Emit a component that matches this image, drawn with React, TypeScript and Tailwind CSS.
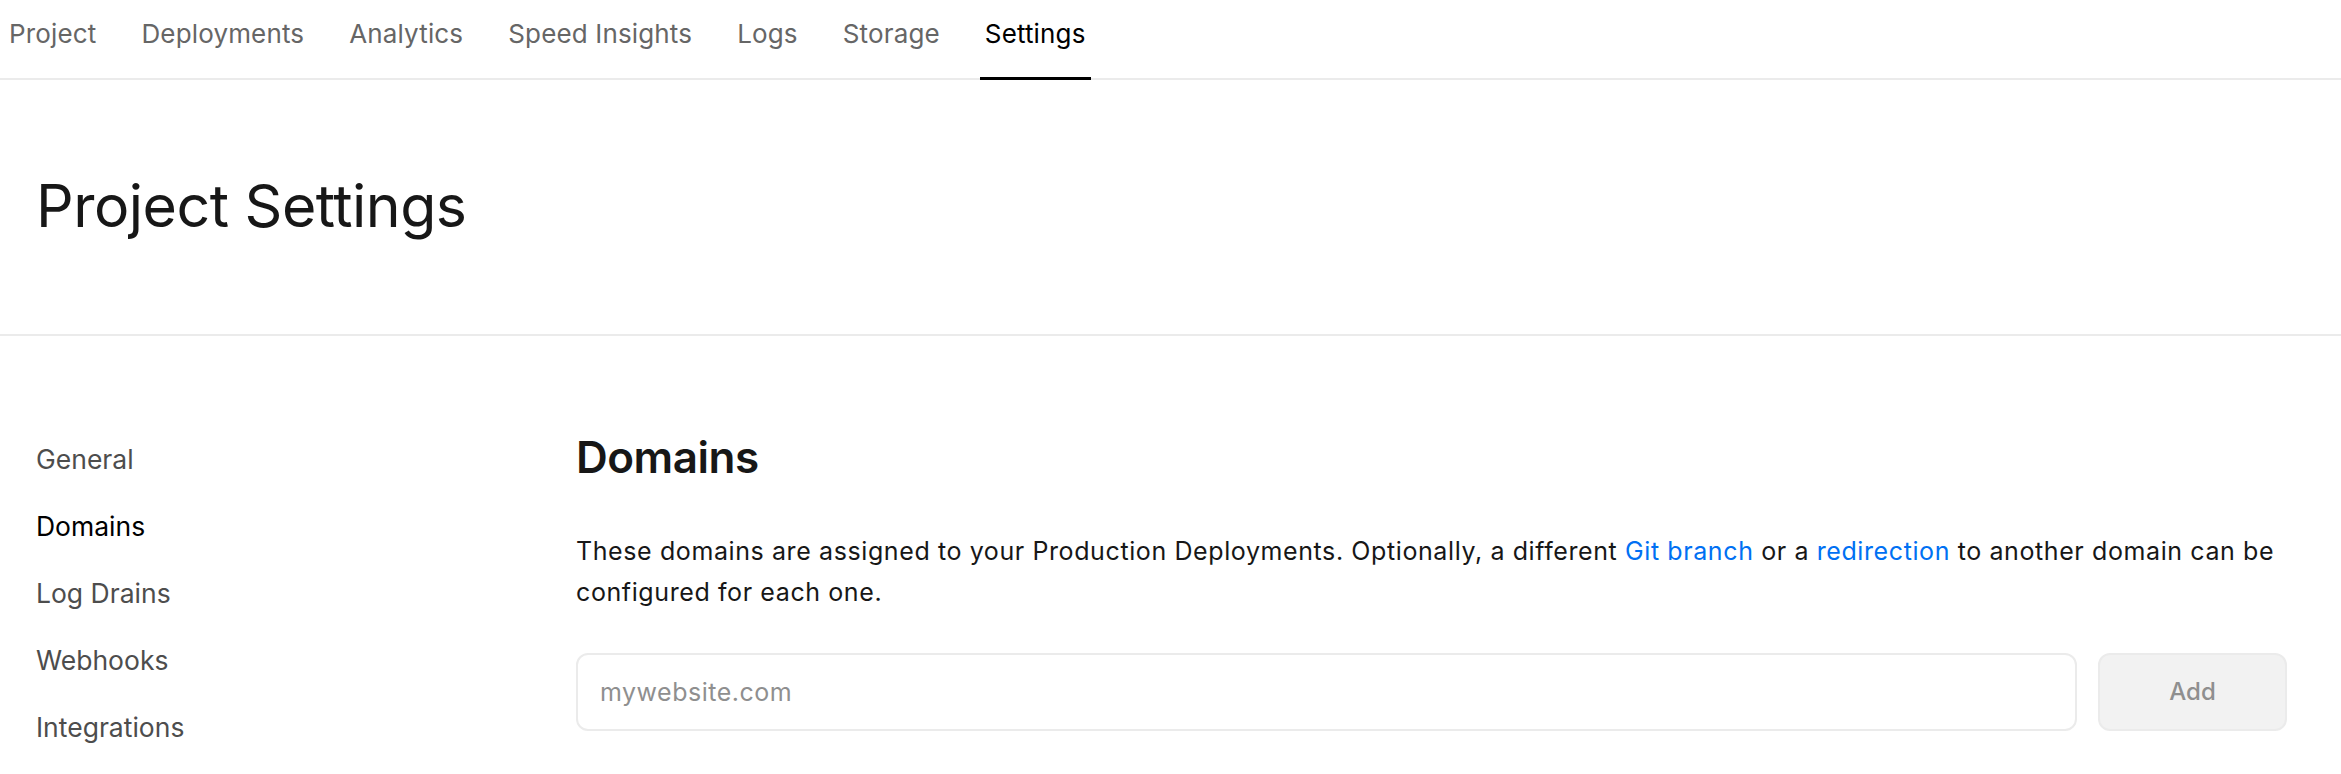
const tabs = ["Project", "Deployments", "Analytics", "Speed Insights", "Logs", "Storage", "Settings"];
const sideItems = ["General", "Domains", "Log Drains", "Webhooks", "Integrations"];

export default function App() {
  return (
    <div className="min-h-screen bg-white font-['Inter',sans-serif] text-[#171717]">
      {/* Top tabs */}
      <nav className="flex h-[80px] gap-[35px] border-b-2 border-[#ebebeb] pl-[4px]">
        {tabs.map((t) => (
          <a
            key={t}
            className={
              t === "Settings"
                ? "-mb-[2px] flex items-center border-b-[3px] border-black px-[5px] pb-[10px] text-[26px] tracking-[0.15px] text-black"
                : "-mb-[2px] flex items-center border-b-[3px] border-transparent px-[5px] pb-[10px] text-[26px] tracking-[0.15px] text-[#666666]"
            }
          >
            {t}
          </a>
        ))}
      </nav>

      {/* Header */}
      <div className="h-[256px] border-b-2 border-[#ebebeb] px-[36px] pt-[96px]">
        <h1 className="text-[59px] leading-none tracking-[-0.5px] text-[#171717]">Project Settings</h1>
      </div>

      {/* Body */}
      <div className="flex pl-[36px] pr-[54px] pt-[90px]">
        <aside className="w-[540px] shrink-0">
          {sideItems.map((s) => (
            <div
              key={s}
              className={
                s === "Domains"
                  ? "text-[26.5px] leading-[67px] text-black"
                  : "text-[26.5px] leading-[67px] text-[#4d4d4d]"
              }
            >
              {s}
            </div>
          ))}
        </aside>

        <main className="flex-1 pt-[9px]">
          <h2 className="text-[44px] font-semibold leading-none tracking-[-0.5px] text-[#171717]">Domains</h2>
          <p className="mt-[52px] text-[25px] leading-[41px] tracking-[0.6px] text-[#171717]">
            These domains are assigned to your Production Deployments. Optionally, a different{" "}
            <a className="text-[#0070f3]">Git branch</a> or a <a className="text-[#0070f3]">redirection</a> to another
            domain can be configured for each one.
          </p>
          <div className="mt-[40px] flex gap-[21px]">
            <input
              placeholder="mywebsite.com"
              className="h-[78px] flex-1 rounded-[12px] border-2 border-[#ebebeb] px-[22px] text-[25px] tracking-[0.5px] outline-none placeholder:text-[#8f8f8f]"
            />
            <button className="h-[78px] w-[189px] rounded-[12px] border-2 border-[#ebebeb] bg-[#f2f2f2] text-[24px] font-medium text-[#8f8f8f]">
              Add
            </button>
          </div>
        </main>
      </div>
    </div>
  );
}
